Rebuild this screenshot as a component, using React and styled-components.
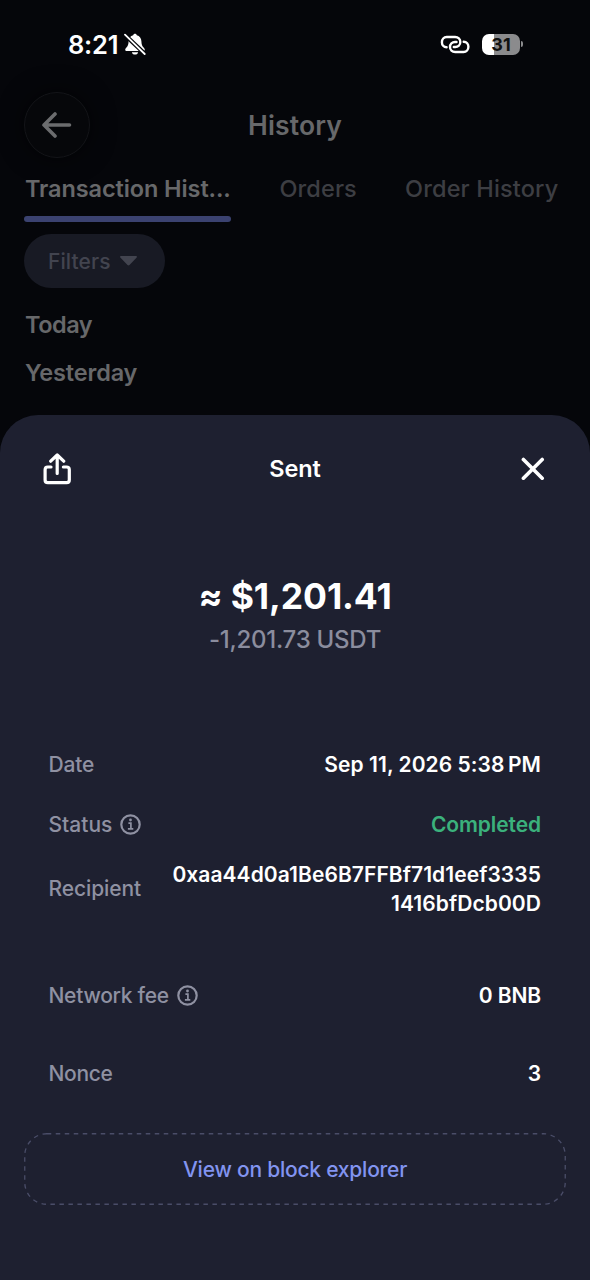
import React from 'react';
import styled, { createGlobalStyle } from 'styled-components';

const GlobalStyle = createGlobalStyle`
  * {
    box-sizing: border-box;
  }

  body {
    margin: 0;
    background: #05060a;
    font-family: Inter, 'Liberation Sans', sans-serif;
    -webkit-font-smoothing: antialiased;
  }

  button {
    font-family: inherit;
    border: none;
    background: none;
    padding: 0;
  }
`;

const Screen = styled.div`
  display: flex;
  flex-direction: column;
  width: 590px;
  height: 1280px;
  overflow: hidden;
  background: #05060a;
`;

const StatusBar = styled.div`
  display: flex;
  justify-content: space-between;
  align-items: center;
  height: 88px;
  padding: 0 67px 0 68px;
  color: #fff;
`;

const StatusGroup = styled.div`
  display: flex;
  align-items: center;
  gap: ${(props) => props.$gap}px;
`;

const Clock = styled.span`
  font-size: 25.5px;
  font-weight: 600;
  letter-spacing: -0.2px;
`;

const Battery = styled.div`
  display: flex;
  align-items: center;
  gap: 1px;
`;

const BatteryBody = styled.div`
  width: 38px;
  height: 21px;
  border-radius: 7px;
  background: linear-gradient(to right, #fff 12px, #8b8b8d 12px);
  color: #111;
  font-size: 18px;
  font-weight: 700;
  line-height: 22px;
  text-align: center;
`;

const BatteryTip = styled.div`
  width: 2px;
  height: 6px;
  border-radius: 0 2px 2px 0;
  background: #8b8b8d;
`;

const Header = styled.div`
  display: grid;
  grid-template-columns: 66px 1fr 66px;
  align-items: center;
  height: 74px;
  padding: 0 24px;
`;

const BackButton = styled.button`
  display: flex;
  justify-content: center;
  align-items: center;
  width: 66px;
  height: 66px;
  border: 1px solid #131418;
  border-radius: 50%;
  background: #06070a;
  box-shadow: 0 0 24px rgba(0, 0, 0, 0.6);
`;

const HeaderTitle = styled.h1`
  margin: 0;
  color: #67686a;
  font-size: 26.5px;
  font-weight: 600;
  letter-spacing: 0.15px;
  text-align: center;
`;

const Tabs = styled.div`
  display: flex;
  gap: 47.5px;
  height: 60px;
  padding: 0 0 0 24px;
`;

const Tab = styled.div`
  display: flex;
  flex-direction: column;
  justify-content: space-between;
  flex: none;
  width: ${(props) => props.$width}px;
  padding-left: 1px;
  padding-top: 12px;
  color: ${(props) => (props.$active ? '#67686a' : '#3d3e43')};
  font-size: 23.5px;
  font-weight: ${(props) => (props.$active ? 600 : 500)};
  line-height: 30px;
  letter-spacing: ${(props) => props.$spacing || 0}px;
  white-space: nowrap;
`;

const TabUnderline = styled.div`
  height: 6px;
  margin-left: -1px;
  border-radius: 3px;
  background: #3b4270;
`;

const FilterButton = styled.button`
  display: flex;
  align-items: center;
  gap: 9px;
  width: 141px;
  height: 54px;
  margin: 12px 0 0 24px;
  padding: 0 24px;
  border-radius: 27px;
  background: #181a24;
  color: #42444f;
  font-size: 21px;
  font-weight: 550;
  letter-spacing: 0.1px;
`;

const DayList = styled.div`
  padding: 13px 25px 0;
`;

const DayTitle = styled.h2`
  margin: 0;
  color: #67686a;
  font-size: 23.5px;
  font-weight: 600;
  line-height: 48px;
  letter-spacing: ${(props) => props.$spacing}px;
`;

const Sheet = styled.div`
  display: flex;
  flex-direction: column;
  flex: none;
  height: 865px;
  margin-top: 18px;
  border-radius: 38px 38px 0 0;
  background: #1e2030;
`;

const SheetHeader = styled.div`
  display: grid;
  grid-template-columns: 32px 1fr 32px;
  align-items: center;
  height: 108px;
  padding: 0 41px;
`;

const SheetTitle = styled.h2`
  margin: 0;
  padding-bottom: 1px;
  color: #fff;
  font-size: 23.5px;
  font-weight: 600;
  letter-spacing: -0.1px;
  text-align: center;
`;

const IconButton = styled.button`
  display: flex;
  justify-content: center;
  align-items: center;
  width: 32px;
  height: 32px;
`;

const Amount = styled.div`
  margin-top: 50px;
  color: #fff;
  font-size: 35.5px;
  font-weight: 700;
  line-height: 48px;
  letter-spacing: -0.1px;
  text-align: center;
`;

const TokenAmount = styled.div`
  color: #8b8d9e;
  font-size: 24px;
  font-weight: 450;
  line-height: 38px;
  letter-spacing: -0.25px;
  text-align: center;
`;

const Details = styled.div`
  display: flex;
  flex-direction: column;
  margin-top: 76px;
  padding: 0 49px 0 48.5px;
`;

const DetailRow = styled.div`
  display: flex;
  justify-content: space-between;
  align-items: center;
  height: ${(props) => props.$height}px;
  margin-top: ${(props) => props.$offset || 0}px;
`;

const Label = styled.div`
  display: flex;
  align-items: center;
  gap: 8px;
  color: #8f91a2;
  font-size: 21px;
  font-weight: 450;
  line-height: 26px;
  letter-spacing: ${(props) => props.$spacing || 0}px;
  white-space: nowrap;

  svg {
    margin-bottom: 2px;
  }
`;

const Value = styled.div`
  padding-top: 1px;
  color: ${(props) => props.$color || '#fff'};
  font-size: 21px;
  font-weight: 600;
  line-height: 28.5px;
  letter-spacing: ${(props) => props.$spacing || 0}px;
  text-align: right;
  white-space: pre;
`;

const ExplorerButton = styled.button`
  position: relative;
  width: 542px;
  height: 72px;
  margin: 20px 24px 0;
  color: #8294f0;
  font-size: 21px;
  font-weight: 500;
  letter-spacing: -0.23px;
`;

const DashedOutline = styled.svg`
  position: absolute;
  top: 0;
  left: 0;
`;

const MutedBell = () => (
  <svg width="22" height="22" viewBox="0 0 22 22">
    <path
      d="M11 0.8c-.9 0-1.600.6-1.800 1.400C6.300 3 4.700 5.300 4.600 8.200c-.1 3-.6 4.600-2 6.100C1.800 15.200 1.200 16 1.200 16.800c0 .9.700 1.300 1.600 1.300h16.400c.9 0 1.600-.4 1.600-1.300 0-.8-.6-1.600-1.400-2.500-1.400-1.500-1.900-3.100-2-6.100-.1-2.900-1.700-5.200-4.600-6C12.600 1.400 11.900.8 11 .8zM7.900 19.300h6.200c-.2 1.400-1.400 2.300-3.100 2.300s-2.900-.9-3.100-2.300z"
      fill="#fff"
    />
    <path d="M0.500 1.500L21 21" stroke="#05060a" strokeWidth="4.200" />
    <path d="M1 1.700L20.700 21" stroke="#fff" strokeWidth="1.800" strokeLinecap="round" />
  </svg>
);

const LinkIcon = () => (
  <svg width="30" height="19" viewBox="0 0 30 19" fill="none" stroke="#fff" strokeWidth="2.400" strokeLinecap="round">
    <path d="M6.600 12.200C3.700 12.200 1.900 9.900 1.900 7.200S3.900 2 6.700 2h8.400c3 0 5.200 2.200 5.200 5s-2.200 5-5 5h-1.500" />
    <path d="M23.700 6.800c2.900 0 4.700 2.300 4.700 5s-2 5.200-4.800 5.200h-8.400c-3 0-5.200-2.200-5.200-5s2.200-5 5-5h1.500" />
  </svg>
);

const BackArrow = () => (
  <svg width="30" height="26" viewBox="0 0 30 26" fill="none" stroke="#6b6c6e" strokeWidth="3.600" strokeLinecap="round" strokeLinejoin="round">
    <path d="M27.500 13H2M13 2L2 13l11 11" />
  </svg>
);

const Caret = () => (
  <svg width="17" height="10" viewBox="0 0 17 10">
    <path d="M0.900 0h15.200c.8 0 1.100.9.600 1.400L9.500 9.100c-.6.600-1.400.6-2 0L.3 1.400C-.2.900.1 0 .9 0z" fill="#42444f" />
  </svg>
);

const ShareIcon = () => (
  <svg width="32" height="32" viewBox="0 0 32 32" fill="none" stroke="#fff" strokeWidth="3.200" strokeLinecap="round" strokeLinejoin="round">
    <path d="M10 14H6.800c-1.700 0-2.700 1-2.700 2.700v10.200c0 1.700 1 2.700 2.700 2.700h18.800c1.700 0 2.700-1 2.700-2.700V16.700c0-1.700-1-2.700-2.700-2.700h-3.200" />
    <path d="M16.200 20.500V2.500M9.700 8.200l6.500-6.200 6.500 6.200" />
  </svg>
);

const CloseIcon = () => (
  <svg width="24" height="24" viewBox="0 0 24 24" stroke="#fff" strokeWidth="3.600" strokeLinecap="round">
    <path d="M2.400 2.400l18.800 18.800M21.200 2.400L2.400 21.200" />
  </svg>
);

const InfoIcon = () => (
  <svg width="21" height="21" viewBox="0 0 21 21" fill="none" stroke="#8f91a2">
    <circle cx="10.500" cy="10.500" r="9.200" strokeWidth="2.200" />
    <path d="M8.400 9.100h2.500v5.600M7.900 14.900h5.400" strokeWidth="1.700" />
    <circle cx="10.500" cy="6" r="1.400" fill="#8f91a2" stroke="none" />
  </svg>
);

const tabs = [
  { title: 'Transaction Hist...', width: 207, active: true, spacing: -0.1 },
  { title: 'Orders', width: 78, spacing: 0.1 },
  { title: 'Order History', width: 160, spacing: 0.15 },
];

const details = [
  { label: 'Date', value: 'Sep 11, 2026 5:38\u2009PM', height: 60, spacing: 0.05, labelSpacing: -0.2 },
  { label: 'Status', value: 'Completed', height: 60, info: true, color: '#3bb17c', spacing: -0.1 },
  { label: 'Recipient', value: '0xaa44d0a1Be6B7FFBf71d1eef3335\n1416bfDcb00D', height: 68, spacing: 0.07, labelSpacing: -0.1 },
  { label: 'Network fee', value: '0 BNB', height: 78, info: true, offset: 34, spacing: -0.1, labelSpacing: -0.27 },
  { label: 'Nonce', value: '3', height: 78, labelSpacing: -0.3 },
];

const App = () => {
  return (
    <Screen>
      <GlobalStyle />
      <StatusBar>
        <StatusGroup $gap={6}>
          <Clock>8:21</Clock>
          <MutedBell />
        </StatusGroup>
        <StatusGroup $gap={12}>
          <LinkIcon />
          <Battery>
            <BatteryBody>31</BatteryBody>
            <BatteryTip />
          </Battery>
        </StatusGroup>
      </StatusBar>

      <Header>
        <BackButton aria-label="Back">
          <BackArrow />
        </BackButton>
        <HeaderTitle>History</HeaderTitle>
      </Header>

      <Tabs>
        {tabs.map((tab) => (
          <Tab key={tab.title} $width={tab.width} $active={tab.active} $spacing={tab.spacing}>
            {tab.title}
            {tab.active && <TabUnderline />}
          </Tab>
        ))}
      </Tabs>

      <FilterButton>
        Filters
        <Caret />
      </FilterButton>

      <DayList>
        <DayTitle $spacing={-0.5}>Today</DayTitle>
        <DayTitle $spacing={-0.15}>Yesterday</DayTitle>
      </DayList>

      <Sheet>
        <SheetHeader>
          <IconButton aria-label="Share">
            <ShareIcon />
          </IconButton>
          <SheetTitle>Sent</SheetTitle>
          <IconButton aria-label="Close">
            <CloseIcon />
          </IconButton>
        </SheetHeader>

        <Amount>≈ $1,201.41</Amount>
        <TokenAmount>-1,201.73 USDT</TokenAmount>

        <Details>
          {details.map((row) => (
            <DetailRow key={row.label} $height={row.height} $offset={row.offset}>
              <Label $spacing={row.labelSpacing}>
                {row.label}
                {row.info && <InfoIcon />}
              </Label>
              <Value $color={row.color} $spacing={row.spacing}>
                {row.value}
              </Value>
            </DetailRow>
          ))}
        </Details>

        <ExplorerButton>
          <DashedOutline width="542" height="72" fill="none">
            <rect x="0.75" y="0.75" width="540.5" height="70.5" rx="22" stroke="#4a4d68" strokeWidth="1.300" strokeDasharray="4.500 4.500" />
          </DashedOutline>
          View on block explorer
        </ExplorerButton>
      </Sheet>
    </Screen>
  );
};

export default App;
